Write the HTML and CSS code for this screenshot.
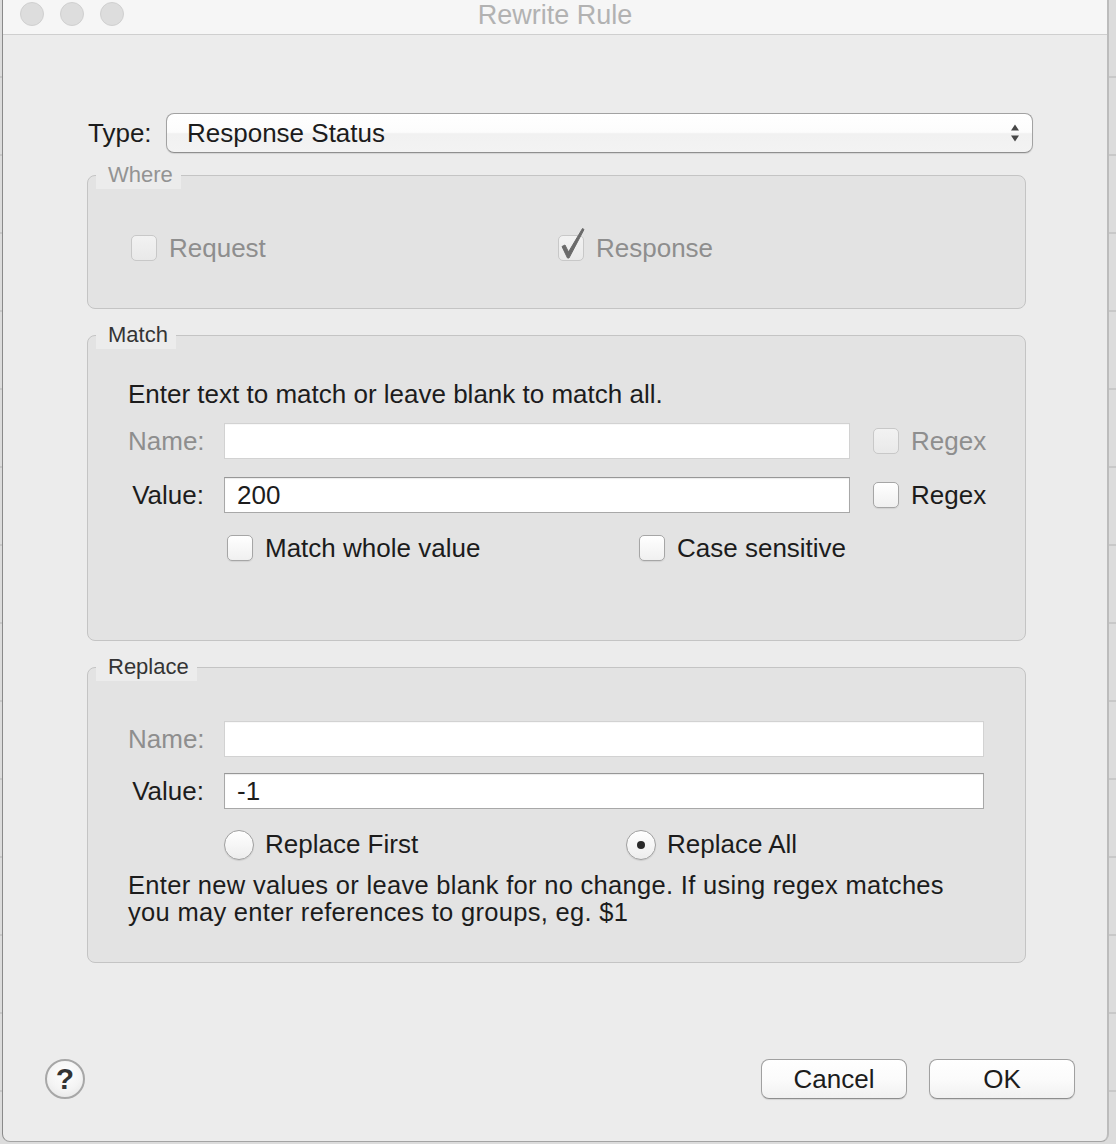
FILE: index.html
```html
<!DOCTYPE html>
<html>
<head>
<meta charset="utf-8">
<title>Rewrite Rule</title>
<link rel="stylesheet" href="styles.css">
</head>
<body>
<div class="window">
  <div class="titlebar">
    <div class="lights"><span class="light"></span><span class="light"></span><span class="light"></span></div>
    <div class="title">Rewrite Rule</div>
    <div></div>
  </div>

  <div class="content">
    <div class="type-row">
      <span class="type-label">Type:</span>
      <div class="select">
        <span class="select-text">Response Status</span>
        <svg class="arrows" width="10" height="20" viewBox="0 0 10 20"><path d="M5 1.5 L9 7.5 H1 Z M5 18.5 L9 12.5 H1 Z" fill="#474747"/></svg>
      </div>
    </div>

    <section class="group group-where">
      <div class="group-title disabled">Where</div>
      <div class="group-box where-box">
        <div class="where-row">
          <div class="check-item where-item disabled"><span class="checkbox disabled"></span>Request</div>
          <div class="check-item disabled"><span class="checkbox disabled"><svg class="checkmark" width="30" height="34" viewBox="0 0 30 34"><path d="M4 19.5 L7 18 L10.5 25 L24.5 1.5 L26 2.5 L11 31 L9.5 31 Z" fill="#6a6a6a" stroke="#6a6a6a" stroke-width="1" stroke-linejoin="round"/></svg></span>Response</div>
        </div>
      </div>
    </section>

    <section class="group">
      <div class="group-title">Match</div>
      <div class="group-box match-box">
        <div class="intro">Enter text to match or leave blank to match all.</div>
        <div class="field-row first">
          <span class="field-label disabled">Name:</span>
          <div class="input disabled"></div>
          <div class="regex check-item disabled"><span class="checkbox disabled"></span>Regex</div>
        </div>
        <div class="field-row gap18">
          <span class="field-label">Value:</span>
          <div class="input">200</div>
          <div class="regex check-item"><span class="checkbox"></span>Regex</div>
        </div>
        <div class="options">
          <div class="check-item opt"><span class="checkbox"></span>Match whole value</div>
          <div class="check-item opt"><span class="checkbox"></span>Case sensitive</div>
        </div>
      </div>
    </section>

    <section class="group">
      <div class="group-title">Replace</div>
      <div class="group-box replace-box">
        <div class="field-row">
          <span class="field-label disabled">Name:</span>
          <div class="input disabled"></div>
        </div>
        <div class="field-row gap16">
          <span class="field-label">Value:</span>
          <div class="input">-1</div>
        </div>
        <div class="radios">
          <div class="radio-item"><span class="radio"></span>Replace First</div>
          <div class="radio-item"><span class="radio selected"><span class="dot"></span></span>Replace All</div>
        </div>
        <div class="help-text">Enter new values or leave blank for no change. If using regex matches<br>you may enter references to groups, eg. $1</div>
      </div>
    </section>
  </div>

  <div class="footer">
    <div class="help-btn">?</div>
    <div class="buttons">
      <div class="btn">Cancel</div>
      <div class="btn">OK</div>
    </div>
  </div>
</div>
</body>
</html>
```

FILE: styles.css
```css
* { box-sizing: border-box; }

html, body {
  margin: 0;
  padding: 0;
}

body {
  width: 1116px;
  height: 1144px;
  overflow: hidden;
  background: repeating-linear-gradient(to bottom, #dcdcdc 0, #dcdcdc 76px, #c8c8c8 76px, #c8c8c8 78px);
  font-family: "Liberation Sans", Arial, sans-serif;
  color: #1c1c1c;
}

.window {
  margin-left: 2px;
  width: 1107px;
  height: 1142px;
  background: #ececec;
  border-left: 1px solid #8a8a8a;
  border-right: 2px solid #bcbcbc;
  border-bottom: 1px solid #a4a4a4;
  border-radius: 0 0 8px 8px;
  display: flex;
  flex-direction: column;
}

/* title bar */
.titlebar {
  height: 35px;
  flex: none;
  background: #f6f6f6;
  border-bottom: 1px solid #cfcfcf;
  display: grid;
  grid-template-columns: 1fr auto 1fr;
  align-items: start;
}

.lights {
  display: flex;
  gap: 16px;
  padding: 2px 0 0 17px;
}

.light {
  width: 24px;
  height: 24px;
  border-radius: 50%;
  background: #dddddd;
  border: 1px solid #d0d0d0;
}

.title {
  font-size: 27px;
  line-height: 30px;
  color: #b2b2b2;
}

/* content */
.content {
  padding: 78px 0 0 84px;
  display: flex;
  flex-direction: column;
  align-items: flex-start;
}

.type-row {
  width: 946px;
  height: 40px;
  display: flex;
  align-items: center;
  font-size: 26px;
}

.type-label {
  margin-left: 1px;
  width: 78px;
}

.select {
  flex: 1;
  height: 40px;
  display: flex;
  align-items: center;
  padding: 0 12px 0 20px;
  border: 1px solid #a2a2a2;
  border-bottom-color: #8f8f8f;
  border-radius: 8px;
  background: linear-gradient(#ffffff 0, #fcfcfc 48%, #f1f1f1 52%, #f3f3f3 100%);
  box-shadow: 0 1px 1px rgba(0, 0, 0, 0.1);
}

.select-text { flex: 1; }

.arrows { flex: none; }

/* groups */
.group {
  width: 939px;
  margin-top: 12px;
  display: flex;
  flex-direction: column;
  align-items: flex-start;
}

.group-where { margin-top: 8px; }

.group-title {
  position: relative;
  z-index: 1;
  margin-left: 9px;
  margin-bottom: -14px;
  height: 28px;
  line-height: 28px;
  padding: 0 8px 0 12px;
  font-size: 22px;
  background: #ececec;
  color: #343434;
}

.group-title.disabled { color: #939393; }

.group-box {
  align-self: stretch;
  border: 1px solid #c4c4c4;
  border-radius: 8px;
  background: #e3e3e3;
  font-size: 26px;
}

.where-box { padding: 59px 0 47px 43px; }
.match-box { padding: 43px 41px 79px 40px; }
.replace-box { padding: 53px 41px 36px 40px; }

.disabled { color: #8e8e8e; }

.where-row { display: flex; }
.where-item { width: 427px; }

.check-item {
  display: flex;
  align-items: center;
  gap: 12px;
  height: 26px;
  line-height: 26px;
  font-size: 26px;
}

.checkbox {
  position: relative;
  flex: none;
  width: 26px;
  height: 26px;
  border: 1px solid #a6a6a6;
  border-radius: 5px;
  background: linear-gradient(#ffffff, #f0f0f0);
  box-shadow: 0 1px 1px rgba(0, 0, 0, 0.08);
}

.checkbox.disabled {
  border-color: #c8c8c8;
  background: linear-gradient(#f2f2f2, #e9e9e9);
  box-shadow: none;
}

.checkmark {
  position: absolute;
  left: -1px;
  top: -9px;
}

.intro {
  font-size: 26px;
  line-height: 30px;
}

.field-row {
  display: flex;
  align-items: center;
  height: 36px;
}

.field-row.first { margin-top: 14px; }
.field-row.gap18 { margin-top: 18px; }
.field-row.gap16 { margin-top: 16px; }

.field-label {
  width: 76px;
  margin-right: 20px;
  text-align: right;
  font-size: 26px;
}

.input {
  flex: 1;
  height: 36px;
  line-height: 34px;
  padding-left: 12px;
  background: #ffffff;
  border: 1px solid #a8a8a8;
  border-top-color: #979797;
  box-shadow: inset 0 1px 1px rgba(0, 0, 0, 0.08);
  font-size: 26px;
  color: #1c1c1c;
}

.input.disabled {
  border-color: #d2d2d2;
  box-shadow: inset 0 1px 1px rgba(0, 0, 0, 0.03);
}

.regex {
  width: 111px;
  margin-left: 23px;
  flex: none;
}

.options {
  display: grid;
  grid-template-columns: 412px 1fr;
  margin: 22px 0 0 96px;
}

.opt .checkbox { margin-left: 3px; }

.radios {
  display: grid;
  grid-template-columns: 402px 1fr;
  margin: 20px 0 0 96px;
  height: 30px;
}

.radio-item {
  display: flex;
  align-items: center;
  gap: 11px;
  font-size: 26px;
}

.radio {
  flex: none;
  width: 30px;
  height: 30px;
  border-radius: 50%;
  border: 1px solid #a0a0a0;
  background: linear-gradient(#ffffff, #ededed);
  box-shadow: 0 1px 1px rgba(0, 0, 0, 0.1);
  display: flex;
  align-items: center;
  justify-content: center;
}

.dot {
  width: 8px;
  height: 8px;
  border-radius: 50%;
  background: #2a2a2a;
}

.help-text {
  margin-top: 13px;
  font-size: 25.5px;
  letter-spacing: 0.3px;
  line-height: 27px;
}

/* footer */
.footer {
  margin-top: auto;
  display: flex;
  align-items: center;
  justify-content: space-between;
  padding: 0 32px 42px 42px;
}

.help-btn {
  width: 40px;
  height: 40px;
  border-radius: 50%;
  border: 2px solid #a7a7a7;
  background: radial-gradient(circle at 50% 35%, #ffffff 0, #f4f4f4 55%, #e2e2e2 100%);
  display: flex;
  align-items: center;
  justify-content: center;
  font-size: 30px;
  font-weight: bold;
  color: #333333;
  line-height: 1;
  margin-top: -1px;
}

.buttons {
  display: flex;
  gap: 22px;
}

.btn {
  width: 146px;
  height: 40px;
  border: 1px solid #a0a0a0;
  border-bottom-color: #8e8e8e;
  border-radius: 8px;
  background: linear-gradient(#ffffff 0, #fbfbfb 50%, #f1f1f1 100%);
  box-shadow: 0 1px 1px rgba(0, 0, 0, 0.1);
  display: flex;
  align-items: center;
  justify-content: center;
  font-size: 26px;
  color: #1c1c1c;
}
```
